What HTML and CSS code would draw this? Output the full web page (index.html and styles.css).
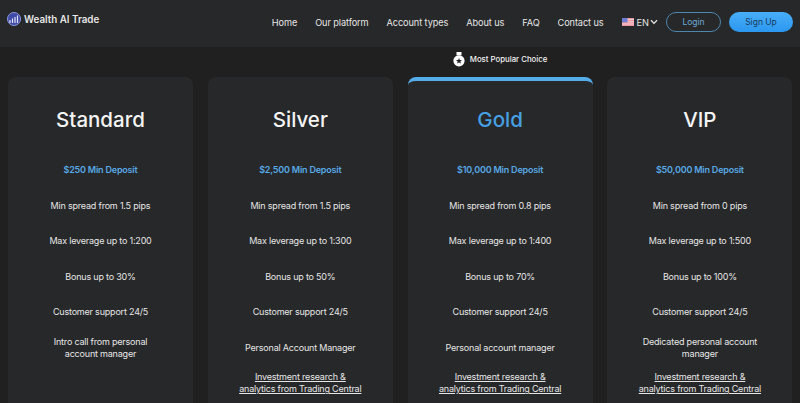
FILE: index.html
```html
<!DOCTYPE html>
<html lang="en">
<head>
  <meta charset="UTF-8" />
  <meta name="viewport" content="width=device-width, initial-scale=1" />
  <title>Account types - Wealth AI Trade</title>
  <link rel="stylesheet" href="styles.css">
</head>
<body>

  <header class="topbar">
    <a href="#" class="logo">
      <svg class="logo-mark" viewBox="0 0 14 14" width="14" height="14">
        <circle cx="7" cy="7" r="6.5" fill="#3f4aa6" />
        <circle cx="7" cy="7" r="6.5" fill="none" stroke="#8c97e0" stroke-width="1" />
        <path d="M3 11V8M5.5 11V6.5M8 11V5M10.5 11V3.5" stroke="#dfe3fa" stroke-width="1.2" />
      </svg>
      Wealth AI Trade
    </a>
    <nav class="menu">
      <a href="#">Home</a>
      <a href="#">Our platform</a>
      <a href="#">Account types</a>
      <a href="#">About us</a>
      <a href="#">FAQ</a>
      <a href="#">Contact us</a>
    </nav>
    <div class="lang">
      <svg viewBox="0 0 12 8" width="12" height="8">
        <rect width="12" height="8" fill="#f6dcdf" />
        <path d="M0 .6h12M0 2.4h12M0 4.2h12M0 6h12M0 7.6h12" stroke="#ea8592" stroke-width=".9" />
        <rect width="5.5" height="4.4" fill="#6f7cd0" />
      </svg>
      <span>EN</span>
      <svg viewBox="0 0 8 6" width="8" height="6">
        <path d="M1 1.2 4 4.4 7 1.2" fill="none" stroke="#e8e8e8" stroke-width="1.3" />
      </svg>
    </div>
    <a href="#" class="btn btn-login">Login</a>
    <a href="#" class="btn btn-signup">Sign Up</a>
  </header>

  <div class="popular">
    <div class="popular-label">
      <svg viewBox="0 0 12 15" width="12" height="15">
        <path d="M3.5 0h5v3.4h-5z" fill="#fff" />
        <circle cx="6" cy="8.8" r="5.6" fill="#fff" />
        <path d="M6 5.9 6.9 7.9 9 8.1 7.4 9.5 7.9 11.6 6 10.5 4.1 11.6 4.6 9.5 3 8.1 5.1 7.9z" fill="#26272a" />
      </svg>
      <span>Most Popular Choice</span>
    </div>
  </div>

  <main class="plans">
    <section class="plan">
      <h2>Standard</h2>
      <ul>
        <li class="deposit">$250 Min Deposit</li>
        <li>Min spread from 1.5 pips</li>
        <li>Max leverage up to 1:200</li>
        <li>Bonus up to 30%</li>
        <li>Customer support 24/5</li>
        <li>Intro call from personal<br>account manager</li>
      </ul>
    </section>
    <section class="plan">
      <h2>Silver</h2>
      <ul>
        <li class="deposit">$2,500 Min Deposit</li>
        <li>Min spread from 1.5 pips</li>
        <li>Max leverage up to 1:300</li>
        <li>Bonus up to 50%</li>
        <li>Customer support 24/5</li>
        <li>Personal Account Manager</li>
        <li class="research">Investment research &amp;<br>analytics from Trading Central</li>
      </ul>
    </section>
    <section class="plan plan-gold">
      <h2>Gold</h2>
      <ul>
        <li class="deposit">$10,000 Min Deposit</li>
        <li>Min spread from 0.8 pips</li>
        <li>Max leverage up to 1:400</li>
        <li>Bonus up to 70%</li>
        <li>Customer support 24/5</li>
        <li>Personal account manager</li>
        <li class="research">Investment research &amp;<br>analytics from Trading Central</li>
      </ul>
    </section>
    <section class="plan">
      <h2>VIP</h2>
      <ul>
        <li class="deposit">$50,000 Min Deposit</li>
        <li>Min spread from 0 pips</li>
        <li>Max leverage up to 1:500</li>
        <li>Bonus up to 100%</li>
        <li>Customer support 24/5</li>
        <li>Dedicated personal account<br>manager</li>
        <li class="research">Investment research &amp;<br>analytics from Trading Central</li>
      </ul>
    </section>
  </main>

</body>
</html>
```

FILE: styles.css
```css
html, body {
  height: 100%;
  overflow: hidden;
}
body {
  margin: 0;
  font-family: Inter, "Liberation Sans", sans-serif;
  background: #202021;
  color: #e6e6e6;
}
a {
  color: inherit;
  text-decoration: none;
}
.topbar {
  height: 47px;
  background: #272829;
  display: flex;
  align-items: flex-start;
  padding: 12px 7px 0 7px;
  box-sizing: border-box;
  font-size: 9.2px;
}
.logo {
  display: flex;
  align-items: center;
  gap: 3px;
  font-size: 9.8px;
  font-weight: 600;
  height: 14px;
  margin-right: auto;
}
.menu {
  display: flex;
  gap: 18px;
  height: 20px;
  align-items: center;
  letter-spacing: -0.1px;
}
.lang {
  display: flex;
  align-items: center;
  gap: 3px;
  height: 20px;
  margin: 0 8px 0 18px;
}
.lang svg + span + svg {
  margin-left: -2px;
}
.btn {
  width: 55px;
  height: 20px;
  border-radius: 10px;
  display: flex;
  align-items: center;
  justify-content: center;
  font-size: 8.5px;
  box-sizing: border-box;
}
.btn-login {
  border: 1px solid #4f86ad;
  color: #6fa8d6;
  margin-right: 8px;
}
.btn-signup {
  width: 64px;
  background: linear-gradient(#48aef8, #2b97f0);
  color: #173a5e;
}
.popular {
  height: 30px;
  display: grid;
  grid-template-columns: repeat(4, 185px);
  column-gap: 14.8px;
  padding: 0 8px;
}
.popular-label {
  grid-column: 3;
  display: flex;
  align-items: center;
  justify-content: center;
  gap: 5px;
  height: 24px;
  font-size: 7.8px;
  font-weight: 500;
  color: #f2f2f2;
}
.plans {
  display: grid;
  grid-template-columns: repeat(4, 185px);
  column-gap: 14.8px;
  padding: 0 8px;
}
.plan {
  background: #272829;
  border-radius: 8px;
  height: 400px;
  text-align: center;
}
.plan h2 {
  margin: 0;
  padding-top: 29px;
  height: 27px;
  font-size: 20.5px;
  line-height: 27px;
  font-weight: 500;
  color: #f4f4f4;
}
.plan-gold {
  border-top: 4px solid #56ace9;
  height: 396px;
}
.plan-gold h2 {
  color: #46a0e3;
  padding-top: 25px;
}
.plan ul {
  list-style: none;
  margin: 19.5px 0 0;
  padding: 0;
  font-size: 9px;
  line-height: 12px;
  letter-spacing: -0.2px;
}
.plan li {
  height: 35.5px;
  display: flex;
  align-items: center;
  justify-content: center;
}
.plan .deposit {
  color: #58a8e6;
  font-weight: 600;
}
.plan .research {
  text-decoration: underline;
}
```
